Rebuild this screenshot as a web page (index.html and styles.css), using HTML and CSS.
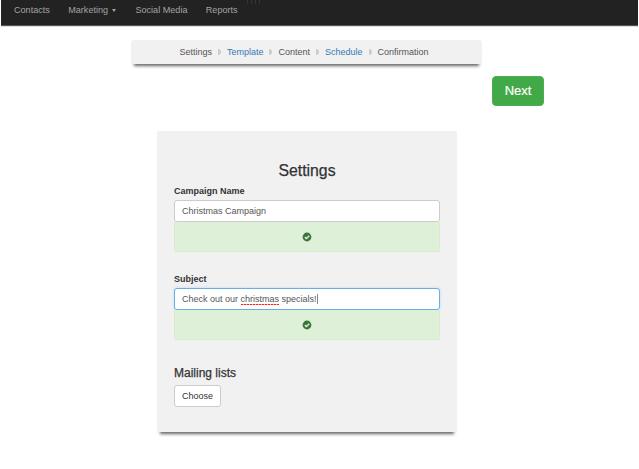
FILE: index.html
```
<!DOCTYPE html>
<html lang="en">
<head>
<meta charset="utf-8">
<title>Campaign settings</title>
<link rel="stylesheet" href="styles.css">
</head>
<body>
<nav class="navbar">
  <a>Contacts</a>
  <a class="dropdown">Marketing <span class="arrow"></span></a>
  <a>Social Media</a>
  <a>Reports</a>
  <span class="grip"><i></i><i></i><i></i><i></i></span>
</nav>
<ol class="steps">
  <li>Settings</li>
  <li class="link">Template</li>
  <li>Content</li>
  <li class="link">Schedule</li>
  <li>Confirmation</li>
</ol>
<div class="actions"><button class="next">Next</button></div>
<main class="card">
  <h1>Settings</h1>
  <section class="field">
    <label>Campaign Name</label>
    <div class="input">Christmas Campaign</div>
    <div class="valid"><svg viewBox="0 0 10 10"><circle cx="5" cy="5" r="4.4"/><path d="M2.9 5.1 4.4 6.5 7.3 3.7"/></svg></div>
  </section>
  <section class="field">
    <label>Subject</label>
    <div class="input focused">Check out our&nbsp;<span class="misspelled">christmas</span>&nbsp;specials!<span class="caret"></span></div>
    <div class="valid"><svg viewBox="0 0 10 10"><circle cx="5" cy="5" r="4.4"/><path d="M2.9 5.1 4.4 6.5 7.3 3.7"/></svg></div>
  </section>
  <h2>Mailing lists</h2>
  <button class="choose">Choose</button>
</main>
</body>
</html>
```
FILE: styles.css
```
* { box-sizing: border-box; }
body {
  margin: 0;
  height: 469px;
  overflow: hidden;
  background: #fff;
  color: #333;
  font: 9px/13px "Liberation Sans", Arial, sans-serif;
}
button { font-family: inherit; }
.navbar {
  display: flex;
  align-items: flex-start;
  height: 26px;
  margin: 0 1px;
  padding: 4px 0 0 13px;
  background: #222;
  border-bottom: 1px solid #555;
  box-shadow: 0 1px 0 #ddd;
  color: #a3a3a3;
  font-size: 9.1px;
}
.navbar a { margin-right: 18.3px; white-space: nowrap; }
.dropdown { display: flex; align-items: center; }
.arrow {
  margin-left: 4px;
  border: 2.5px solid transparent;
  border-top: 3px solid #a3a3a3;
  border-bottom: 0;
  margin-right: 1px;
}
.grip { display: flex; gap: 3px; margin: -4px 0 0 -9px; }
.grip i { width: 1px; height: 4px; background: #343434; }
.steps {
  display: flex;
  justify-content: center;
  align-items: center;
  width: 351px;
  height: 24px;
  margin: 14px 0 0 131px;
  padding: 0 5px 0 0;
  list-style: none;
  background: #f1f1f1;
  border-radius: 3px;
  box-shadow: 0 5px 3px -3px #666;
  color: #555;
}
.steps li { display: flex; align-items: center; }
.steps li + li::before {
  content: "";
  width: 3px;
  height: 6px;
  margin: 0 6px;
  background: #ccc;
  border-radius: 0 3px 3px 0;
}
.steps .link { color: #337ab7; }
.actions { height: 55px; margin-top: 12px; padding-left: 492px; }
.next {
  display: block;
  width: 52px;
  height: 30px;
  padding: 0 0 1px;
  border: 1px solid #4cae4c;
  border-radius: 4px;
  background: #41a948;
  color: #fff;
  font-size: 13px;
  -webkit-text-stroke: .2px #fff;
}
.card {
  width: 300px;
  height: 301px;
  margin-left: 157px;
  padding: 30px 17px 0;
  background: #f1f1f1;
  border-radius: 2px;
  box-shadow: 0 5px 3px -3px #666;
}
h1, h2 { margin: 0; font-weight: 400; -webkit-text-stroke: .25px #333; }
h1 { font-size: 15.8px; line-height: 20px; text-align: center; }
h2 { font-size: 12px; line-height: 16px; }
.field { width: 266px; height: 88px; padding-top: 4px; }
.field label { display: block; height: 15px; font-weight: 700; }
.field:nth-of-type(2) { height: 96px; }
.input {
  display: flex;
  align-items: center;
  height: 22px;
  padding: 0 7px;
  border: 1px solid #ccc;
  border-radius: 3px;
  background: #fff;
  color: #555;
}
.focused { border-color: #66afe9; box-shadow: 0 0 3px #66afe955; }
.misspelled {
  background: repeating-linear-gradient(90deg, #f22 0 2px, #faa 2px 3px) 0 11px / 100% 1px no-repeat;
}
.caret { width: 1px; height: 10px; background: #888; }
.valid {
  display: flex;
  align-items: center;
  justify-content: center;
  height: 30px;
  border: 1px solid #d9ebcc;
  border-top: 0;
  border-radius: 0 0 2px 2px;
  background: #dff0d8;
}
.valid svg { width: 10px; height: 10px; }
.valid circle { fill: #3c763d; }
.valid path { fill: none; stroke: #dff0d8; stroke-width: 1.5; }
.choose {
  display: block;
  width: 47px;
  height: 22px;
  margin-top: 4px;
  padding: 0;
  border: 1px solid #ccc;
  border-radius: 3px;
  background: #fff;
  color: #333;
  font-size: 9px;
}
```
